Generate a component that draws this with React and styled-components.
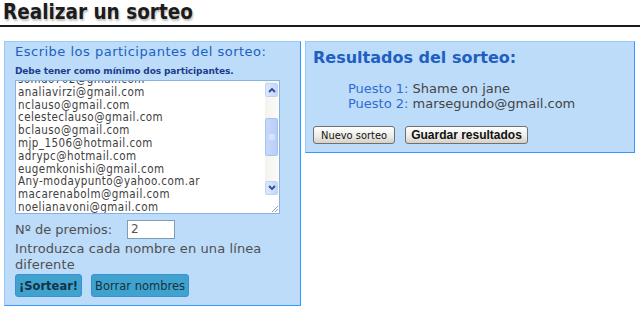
import React from "react";
import styled, { createGlobalStyle } from "styled-components";

const GlobalStyle = createGlobalStyle`
  html, body { margin: 0; padding: 0; background: #ffffff; }
  body { font-family: "DejaVu Sans", Verdana, sans-serif; color: #444; }
`;

const Page = styled.div`
  width: 640px;
  height: 315px;
  overflow: hidden;
`;

const Title = styled.h2`
  margin: 0;
  padding: 0 0 0 3px;
  height: 25px;
  font-family: "DejaVu Sans Condensed", "DejaVu Sans", sans-serif;
  font-weight: bold;
  font-size: 20.5px;
  line-height: 25px;
  color: #1c1c1c;
  text-shadow: 1px 2px 2px rgba(0, 0, 0, 0.25);
  border-bottom: 2px solid #1a1a1a;
`;

const Columns = styled.div`
  display: flex;
  align-items: flex-start;
  gap: 4px;
  padding: 14px 0 0 4px;
`;

const Panel = styled.section`
  box-sizing: border-box;
  width: ${(p) => p.$w}px;
  background: #bcdcfa;
  border: 1px solid;
  border-color: #9ccaf6 #3399ff #3399ff #9ccaf6;
  padding: ${(p) => p.$pad};
`;

const Heading = styled.h3`
  margin: 0;
  font-size: 13px;
  line-height: 16px;
  font-weight: normal;
  color: #2060c0;
  letter-spacing: 0.5px;
`;

const Note = styled.p`
  margin: 5px 0 0;
  font-size: 9px;
  line-height: 12px;
  font-weight: bold;
  color: #1d3c8c;
  letter-spacing: -0.1px;
`;

const TextBox = styled.div`
  margin-top: 3px;
  box-sizing: border-box;
  width: 265px;
  height: 134px;
  border: 1px solid #86b3e4;
  background: #fff;
  display: flex;
`;

const Lines = styled.div`
  flex: 1;
  overflow: hidden;
  padding-left: 2px;
`;

const LinesInner = styled.div`
  margin-top: -8px;
  font-family: "DejaVu Sans Condensed", "DejaVu Sans", sans-serif;
  font-size: 11.5px;
  line-height: 12.8px;
  letter-spacing: 0.45px;
  color: #404040;
`;

const ScrollBar = styled.div`
  width: 14px;
  display: flex;
  flex-direction: column;
  padding-top: 2px;
  background: linear-gradient(to right, #f3f3ee, #fbfbf8);
`;

const ScrollBtn = styled.div`
  height: 12px;
  margin: 0 1px 0 0;
  border: 1px solid #c2d3f2;
  border-radius: 2px;
  background: linear-gradient(to right, #dde8fd, #c5d6fb);
  display: flex;
  align-items: center;
  justify-content: center;
`;

const Track = styled.div`
  flex: ${(p) => p.$grow};
  height: ${(p) => p.$h}px;
`;

const Thumb = styled.div`
  height: 36px;
  margin-right: 1px;
  border: 1px solid #a9c1f1;
  border-radius: 2px;
  background: linear-gradient(to right, #c8d8fb, #b8cdf8);
  display: flex;
  align-items: center;
  justify-content: center;
`;

const Grip = styled.div`
  height: 18px;
  background: #fff;
  display: flex;
  align-items: flex-end;
  justify-content: flex-end;
`;

const FieldRow = styled.div`
  margin-top: 6px;
  display: flex;
  align-items: center;
  height: 19px;
  font-size: 13px;
  color: #505050;
`;

const Label = styled.span`
  width: 112px;
`;

const NumInput = styled.div`
  box-sizing: border-box;
  width: 48px;
  height: 19px;
  border: 1px solid #7f9db9;
  background: #fff;
  font-size: 12px;
  line-height: 17px;
  padding-left: 3px;
  color: #555;
`;

const Hint = styled.p`
  margin: 2px 0 0;
  font-size: 13px;
  line-height: 16px;
  color: #505050;
  letter-spacing: 0.1px;
`;

const ButtonRow = styled.div`
  display: flex;
  gap: ${(p) => p.$gap}px;
  margin-top: ${(p) => p.$mt}px;
`;

const BlueButton = styled.button`
  box-sizing: border-box;
  height: 23px;
  padding: 0 3px;
  border: 1px solid #3b8fd8;
  border-radius: 3px;
  background: #40a3cd;
  font-family: "DejaVu Sans", sans-serif;
  font-size: 11.5px;
  font-weight: ${(p) => (p.$bold ? "bold" : "normal")};
  color: #143246;
`;

const ResultsHeading = styled.h3`
  margin: 0;
  font-size: 16px;
  line-height: 20px;
  font-weight: bold;
  color: #1f5fc2;
`;

const Results = styled.div`
  margin: 13px 0 0 35px;
  font-size: 13px;
  line-height: 15px;
  color: #444;
`;

const Place = styled.span`
  color: #2f6dd0;
`;

const GrayButton = styled.button`
  box-sizing: border-box;
  height: 18px;
  padding: 0 ${(p) => (p.$bold ? 5 : 7)}px;
  border: 1px solid #707070;
  border-radius: 3px;
  background: linear-gradient(to bottom, #ffffff, #ecebe6 60%, #d6d0c5);
  font-family: ${(p) =>
    p.$bold ? '"Liberation Sans", Arial, sans-serif' : '"DejaVu Sans Condensed", sans-serif'};
  font-size: ${(p) => (p.$bold ? 12 : 11)}px;
  font-weight: ${(p) => (p.$bold ? "bold" : "normal")};
  color: #111;
`;

const emails = [
  "sonido702@gmail.com",
  "analiavirzi@gmail.com",
  "nclauso@gmail.com",
  "celesteclauso@gmail.com",
  "bclauso@gmail.com",
  "mjp_1506@hotmail.com",
  "adrypc@hotmail.com",
  "eugemkonishi@gmail.com",
  "Any-modaypunto@yahoo.com.ar",
  "macarenabolm@gmail.com",
  "noelianavoni@gmail.com",
];

const Arrow = ({ up }) => (
  <svg width="8" height="6" viewBox="0 0 8 6">
    <path
      d={up ? "M1 5 L4 2 L7 5" : "M1 1 L4 4 L7 1"}
      fill="none"
      stroke="#2a4d9a"
      strokeWidth="1.8"
    />
  </svg>
);

export default function App() {
  return (
    <Page>
      <GlobalStyle />
      <Title>Realizar un sorteo</Title>
      <Columns>
        <Panel $w={297} $pad="2px 10px 8px 10px">
          <Heading>Escribe los participantes del sorteo:</Heading>
          <Note>Debe tener como mínimo dos participantes.</Note>
          <TextBox>
            <Lines>
              <LinesInner>
                {emails.map((e) => (
                  <div key={e}>{e}</div>
                ))}
              </LinesInner>
            </Lines>
            <ScrollBar>
              <ScrollBtn>
                <Arrow up />
              </ScrollBtn>
              <Track $h={21} />
              <Thumb>
                <svg width="6" height="6" viewBox="0 0 6 6">
                  <path d="M0 1h6M0 3h6M0 5h6" stroke="#eef3fd" strokeWidth="1" />
                </svg>
              </Thumb>
              <Track $grow={1} />
              <ScrollBtn>
                <Arrow />
              </ScrollBtn>
              <Grip>
                <svg width="10" height="10" viewBox="0 0 10 10">
                  <path d="M9 3 L3 9 M9 6 L6 9" stroke="#9a9a9a" strokeWidth="1" />
                </svg>
              </Grip>
            </ScrollBar>
          </TextBox>
          <FieldRow>
            <Label>Nº de premios:</Label>
            <NumInput>2</NumInput>
          </FieldRow>
          <Hint>Introduzca cada nombre en una línea diferente</Hint>
          <ButtonRow $gap={9} $mt={1}>
            <BlueButton $bold>¡Sortear!</BlueButton>
            <BlueButton>Borrar nombres</BlueButton>
          </ButtonRow>
        </Panel>
        <Panel $w={330} $pad="6px 7px 8px 7px">
          <ResultsHeading>Resultados del sorteo:</ResultsHeading>
          <Results>
            <div>
              <Place>Puesto 1:</Place> Shame on jane
            </div>
            <div>
              <Place>Puesto 2:</Place> marsegundo@gmail.com
            </div>
          </Results>
          <ButtonRow $gap={10} $mt={15}>
            <GrayButton>Nuevo sorteo</GrayButton>
            <GrayButton $bold>Guardar resultados</GrayButton>
          </ButtonRow>
        </Panel>
      </Columns>
    </Page>
  );
}
